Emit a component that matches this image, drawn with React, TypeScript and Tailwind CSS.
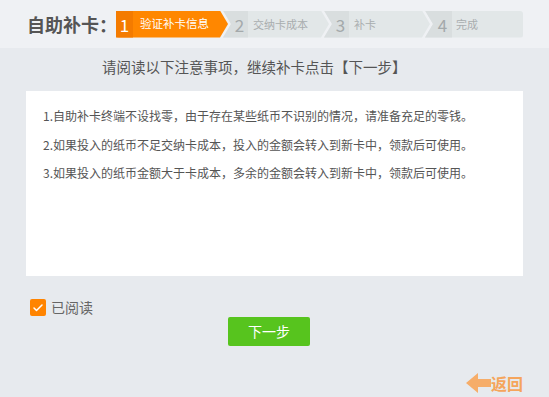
import { Check } from "lucide-react";

const NOTICES = [
  "1.自助补卡终端不设找零，由于存在某些纸币不识别的情况，请准备充足的零钱。",
  "2.如果投入的纸币不足交纳卡成本，投入的金额会转入到新卡中，领款后可使用。",
  "3.如果投入的纸币金额大于卡成本，多余的金额会转入到新卡中，领款后可使用。",
];

function Steps() {
  return (
    <div className="flex h-[27px] w-[407px] shrink-0">
      <div className="flex h-full w-[112px] shrink-0 rounded-l-[3px] bg-[#ff8700] [clip-path:polygon(0_0,calc(100%_-_8px)_0,100%_50%,calc(100%_-_8px)_100%,0_100%)]">
        <div className="flex w-[17px] items-center justify-center bg-[#f47b00] text-[17px] leading-none text-white">
          1
        </div>
        <div className="flex items-center whitespace-nowrap pl-[7px] text-[11.5px] text-white">验证补卡信息</div>
      </div>
      <div className="-ml-[5px] flex h-full w-[106px] shrink-0 bg-[#e2e7e8] [clip-path:polygon(0_0,calc(100%_-_8px)_0,100%_50%,calc(100%_-_8px)_100%,0_100%,8px_50%)]">
        <div className="flex w-[25px] items-center justify-center bg-[#d9dedf] pl-[8px] text-[17px] leading-none text-[#a4a9ab]">
          2
        </div>
        <div className="flex items-center whitespace-nowrap pl-[5px] text-[11px] text-[#a9adaf]">交纳卡成本</div>
      </div>
      <div className="-ml-[5px] flex h-full w-[106px] shrink-0 bg-[#e2e7e8] [clip-path:polygon(0_0,calc(100%_-_8px)_0,100%_50%,calc(100%_-_8px)_100%,0_100%,8px_50%)]">
        <div className="flex w-[25px] items-center justify-center bg-[#d9dedf] pl-[8px] text-[17px] leading-none text-[#a4a9ab]">
          3
        </div>
        <div className="flex items-center whitespace-nowrap pl-[5px] text-[11px] text-[#a9adaf]">补卡</div>
      </div>
      <div className="-ml-[5px] flex h-full w-[98px] shrink-0 rounded-r-[3px] bg-[#e2e7e8] [clip-path:polygon(0_0,100%_0,100%_100%,0_100%,8px_50%)]">
        <div className="flex w-[27px] items-center justify-center bg-[#d9dedf] pl-[8px] text-[17px] leading-none text-[#a4a9ab]">
          4
        </div>
        <div className="flex items-center whitespace-nowrap pl-[4px] text-[11px] text-[#a9adaf]">完成</div>
      </div>
    </div>
  );
}

export default function App() {
  return (
    <div className="flex h-[397px] w-[549px] flex-col overflow-hidden bg-[#e7eaee] font-['Noto_Sans_CJK_SC','Noto_Sans',sans-serif]">
      <div className="flex h-[48px] shrink-0 items-center bg-[#eff1f4] pl-[27px]">
        <div className="w-[89px] shrink-0 whitespace-nowrap text-[18px] font-bold text-[#555]">自助补卡：</div>
        <Steps />
      </div>

      <div className="ml-[102px] mt-[9px] whitespace-nowrap text-[14.5px] leading-[20px] text-[#555]">
        请阅读以下注意事项，继续补卡点击【下一步】
      </div>

      <div className="ml-[26px] mt-[14px] h-[185px] w-[497px] bg-white pl-[17px] pt-[11px]">
        {NOTICES.map((line) => (
          <p key={line} className="whitespace-nowrap text-[12px] leading-[28.5px] text-[#555]">
            {line}
          </p>
        ))}
      </div>

      <div className="ml-[30px] mt-[23px] flex h-[17px] items-center gap-[5px]">
        <div className="flex h-[17px] w-[16px] items-center justify-center rounded-[2px] bg-[#ff8400]">
          <Check className="h-[12px] w-[12px] text-white" strokeWidth={3} />
        </div>
        <span className="text-[14px] text-[#666]">已阅读</span>
      </div>

      <button className="ml-[228px] mt-[1px] flex h-[29px] w-[82px] items-center justify-center rounded-[2px] bg-[#57c41e] text-[14px] text-white">
        下一步
      </button>

      <div className="mr-[26px] mt-[27px] flex items-center self-end">
        <svg width="25" height="20" viewBox="0 0 25 20">
          <polygon points="0,10 12,0 12,6 25,6 25,14 12,14 12,20" fill="#f6ad69" />
        </svg>
        <span className="text-[16px] font-bold leading-[20px] text-[#f5a55c]">返回</span>
      </div>
    </div>
  );
}
